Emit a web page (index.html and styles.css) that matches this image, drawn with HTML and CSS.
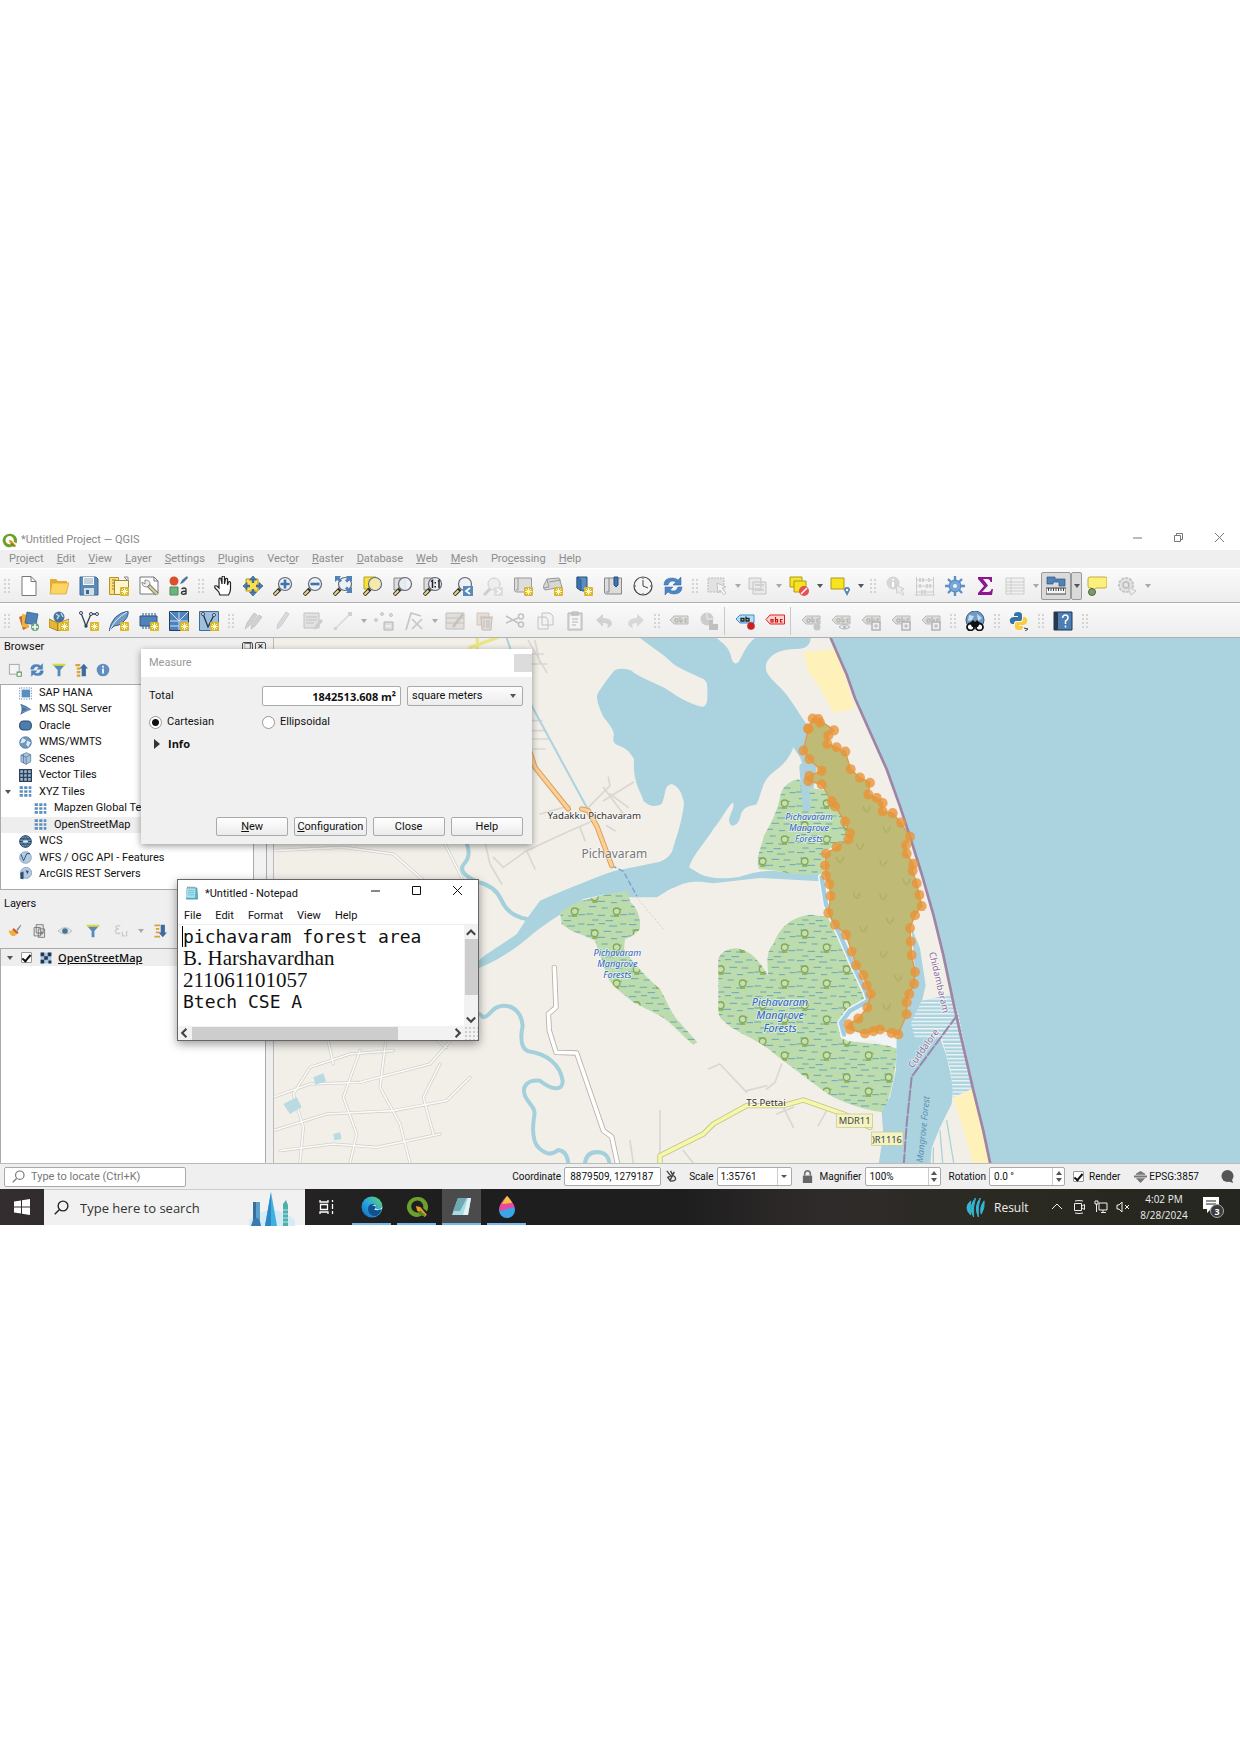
FILE: index.html
```html
<!DOCTYPE html>
<html lang="en">
<head>
<meta charset="utf-8">
<title>*Untitled Project — QGIS</title>
<link rel="stylesheet" href="styles.css">
</head>
<body>
<svg class="sprite" aria-hidden="true">
  <defs>
    <g id="star"><rect x="11" y="11" width="9" height="9" rx="1" fill="#d9b72e"/><path d="M15.500 12v7M12 15.500h7M13 13l5 5M18 13l-5 5" stroke="#fff9d0" stroke-width="1"/></g>
    <g id="lens"><path d="M1 19l6-6" stroke="#333" stroke-width="4"/><path d="M1.500 18.500l4-4" stroke="#f0d77a" stroke-width="2"/><circle cx="12" cy="8" r="6.500" fill="#e9f0f5" fill-opacity=".85" stroke="#667" stroke-width="1.200"/></g>
    <g id="tag" fill="#dcdcd8" stroke="#bbb"><path d="M1 9l4-4h14v8H5z"/><path d="M6 11V8h3v3zM11 6v5h2V8M18 8h-2v3h2" fill="none" stroke="#aaa"/></g>
    <g id="grid9" fill="#5f8fc0"><path d="M1 2h5v4H1zM8 2h5v4H8zM15 2h4v4h-4zM1 8h5v4H1zM8 8h5v4H8zM15 8h4v4h-4zM1 14h5v4H1zM8 14h5v4H8zM15 14h4v4h-4z"/></g>
  </defs>
  <symbol id="i-new" viewBox="0 0 20 20"><path d="M3 .5h9l5 5v14H3z" fill="#fff" stroke="#777"/><path d="M12 .5v5h5" fill="none" stroke="#777"/></symbol>
  <symbol id="i-open" viewBox="0 0 20 20"><path d="M1 3h6l2 2h9v12H1z" fill="#e8ac35"/><path d="M3 7h17l-3 11H1z" fill="#fbd663" stroke="#d9a032" stroke-width=".7"/></symbol>
  <symbol id="i-save" viewBox="0 0 20 20"><path d="M1 1h16l2 2v16H1z" fill="#5a8ab8" stroke="#3c6891"/><path d="M4 1h11v8H4z" fill="#f5f7f9"/><path d="M5 3h9M5 5h9M5 7h9" stroke="#9ab"/><path d="M5 12h10v7H5z" fill="#d5dde4"/><path d="M7 14h3v4H7z" fill="#3c6891"/></symbol>
  <symbol id="i-layout" viewBox="0 0 20 20"><path d="M.5 1.500h9v17h-9z" fill="#fbe17c" stroke="#b8922b"/><path d="M3 4h4M3 7h3M3 10h4M3 13h3" stroke="#9a7b1d"/><path d="M5.500 4.500h14v14h-14z" fill="#fdf5d0" stroke="#a9862a"/><path d="M15 1h4v4z" fill="#fff" stroke="#888"/><use href="#star"/></symbol>
  <symbol id="i-manager" viewBox="0 0 20 20"><path d="M1 1h14l4 4v13H1z" fill="#fff" stroke="#777"/><path d="M15 1v4h4" fill="none" stroke="#777"/><path d="M9 9l9 9" stroke="#777" stroke-width="4"/><path d="M10 10l8 8" stroke="#d5cf96" stroke-width="2.400"/><path d="M6 4v4l-3-2q0 5 5 5l3-3q0-4-5-4z" fill="#eee" stroke="#777" stroke-width=".8"/></symbol>
  <symbol id="i-style" viewBox="0 0 20 20"><circle cx="5" cy="5" r="4.500" fill="#d9502f"/><path d="M11 8l2-4 5-4 1 2-5 5z" fill="#53779e"/><path d="M1 11h8v8H1z" fill="#6cb37c" stroke="#4c8a5a"/><path d="M12.500 13q3-2 4.500 0v5.500M17 15q-5 0-4.500 2.500 2 2 4.500-.5" fill="none" stroke="#333" stroke-width="1.300"/></symbol>
  <symbol id="i-hand" viewBox="0 0 20 20"><path d="M7 19q-1-4-5-7-1-3 2-2l2 2V3q1-2 2 0l1 5V1q1.500-2 2.500 0v7l1-5q1.500-1.500 2 0v6l1-3q2-1 2 1v6q0 3-2 6z" fill="#fff" stroke="#222" stroke-width="1.200"/></symbol>
  <symbol id="i-pan" viewBox="0 0 20 20"><path d="M3 3h12v12H3z" fill="#fbe04b" stroke="#b79a1e"/><path d="M10 0l3.500 4h-7zM10 20l3.500-4h-7zM0 10l4-3.500v7zM20 10l-4-3.500v7z" fill="#4f82b8" stroke="#2d547e" stroke-width=".7"/><path d="M10 3v4M10 13v4M3 10h4M13 10h4" stroke="#3f6c9c" stroke-width="2.400"/></symbol>
  <symbol id="i-zin" viewBox="0 0 20 20"><use href="#lens"/><path d="M12 3.500v9M7.500 8h9" stroke="#3f73ad" stroke-width="2.600"/></symbol>
  <symbol id="i-zout" viewBox="0 0 20 20"><use href="#lens"/><path d="M7.500 8h9" stroke="#3f73ad" stroke-width="2.600"/></symbol>
  <symbol id="i-zfull" viewBox="0 0 20 20"><use href="#lens"/><path d="M2 0h6L6.500 2 9 4.500 7 6.500 4.500 4 2 6zM19 0h-6l1.500 2L12 4.500l2 2L17 4l2 2zM19 17h-6l1.500-2-2.500-2.500 2-2 2.500 2.500 2.500-2z" fill="#4f82b8"/></symbol>
  <symbol id="i-zsel" viewBox="0 0 20 20"><path d="M1 1h12v12H1z" fill="#f7e23c" stroke="#b7a51e"/><use href="#lens"/><circle cx="12" cy="8" r="5.500" fill="#f4e9a8"/></symbol>
  <symbol id="i-zlay" viewBox="0 0 20 20"><path d="M1 2h11v12H1z" fill="#ddd" stroke="#888"/><use href="#lens"/></symbol>
  <symbol id="i-znat" viewBox="0 0 20 20"><path d="M1 2h11v12H1z" fill="#ddd" stroke="#888"/><use href="#lens"/><path d="M8 5.500l1.500-1V12M15 5.500l1-1V12" fill="none" stroke="#222" stroke-width="1.500"/><path d="M11.500 6h1.500v1.500h-1.500zM11.500 10h1.500v1.500h-1.500z" fill="#222"/></symbol>
  <symbol id="i-zlast" viewBox="0 0 20 20"><use href="#lens"/><path d="M10 10h10v10H10z" fill="#5a8ab8"/><path d="M17 12l-4 3 4 3" fill="none" stroke="#fff" stroke-width="1.600"/></symbol>
  <symbol id="i-znext" viewBox="0 0 20 20"><path d="M1 19l6-6" stroke="#ccc" stroke-width="3"/><circle cx="11" cy="8" r="6" fill="#eee" stroke="#ccc"/><path d="M11 11h9v9h-9z" fill="#ddd"/><path d="M14 13l3 2.500-3 2.500" fill="none" stroke="#fff" stroke-width="1.500"/></symbol>
  <symbol id="i-mapview" viewBox="0 0 20 20"><path d="M1.500 2h17v14h-15q-2 0-2-2z" fill="#ddd" stroke="#999"/><path d="M5 2v12H3" fill="none" stroke="#999"/><use href="#star"/></symbol>
  <symbol id="i-3d" viewBox="0 0 20 20"><path d="M4 3l12-1 3 9-17 3-2-3z" fill="#d6d6d6" stroke="#999"/><path d="M4 3l2 8-6 1M6 6l12-2" fill="none" stroke="#999"/><use href="#star"/></symbol>
  <symbol id="i-bm" viewBox="0 0 20 20"><path d="M4 1h10v14h-4l-6-3z" fill="#5a8cc2" stroke="#274f7c"/><path d="M4 1l4 3v11l-4-3z" fill="#3e74ad" stroke="#274f7c" stroke-width=".7"/><use href="#star"/></symbol>
  <symbol id="i-bms" viewBox="0 0 20 20"><path d="M1.500 2h17v16h-15q-2 0-2-2zM6 2v14H3" fill="#dcdcdc" stroke="#888"/><path d="M11 1h4v8l-2 2-2-2z" fill="#3e74ad" stroke="#274f7c"/></symbol>
  <symbol id="i-clock" viewBox="0 0 20 20"><circle cx="10" cy="10" r="9" fill="#f5f5f5" stroke="#444" stroke-width="1.200"/><path d="M10 4v6l5 2M10 2v1M10 17v1M2 10h1M17 10h1" fill="none" stroke="#444"/></symbol>
  <symbol id="i-refresh" viewBox="0 0 20 20"><path d="M1 9q0-7 8-7 4 0 6 2l3-3v8h-8l3-3q-6-3-8 3zM19 11q0 7-8 7-4 0-6-2l-3 3v-8h8l-3 3q6 3 8-3z" fill="#4d86c4" stroke="#31659c" stroke-width=".5"/></symbol>
  <symbol id="i-select" viewBox="0 0 20 20"><path d="M1 2h16v14H1z" fill="#e2e2e2" stroke="#bbb" stroke-dasharray="2 1"/><path d="M10 7l9 4-4 1 4 5-2 2-4-5-2 3z" fill="#f5f5f5" stroke="#c5c5c5"/></symbol>
  <symbol id="i-form" viewBox="0 0 20 20"><path d="M1 2h12v11H1zM5 6h13v12H5z" fill="#e9e9e9" stroke="#c4c4c4"/><path d="M7 9h9M7 14h9" stroke="#d0d0d0" stroke-width="2"/></symbol>
  <symbol id="i-desel" viewBox="0 0 20 20"><path d="M1 1h12v10H1z" fill="#f7e41e" stroke="#a89b22"/><path d="M5 5h12v11H5z" fill="#f7e41e" stroke="#a89b22"/><circle cx="15" cy="15" r="5" fill="#e65252"/><path d="M12 18l6-6" stroke="#fff" stroke-width="1.500"/></symbol>
  <symbol id="i-selloc" viewBox="0 0 20 20"><path d="M1 2h13v11H1z" fill="#f7e41e" stroke="#a89b22"/><path d="M17 20l-3-6q0-3 3-3t3 3z" fill="#5a84ad"/><circle cx="17" cy="14" r="1.200" fill="#fff"/></symbol>
  <symbol id="i-ident" viewBox="0 0 20 20"><circle cx="8" cy="7" r="6.500" fill="#d6d6d6"/><path d="M8 6v5M8 3v1.500" stroke="#fff" stroke-width="2"/><path d="M11 9l8 4-3 1 3 4-1.500 1.500-3.500-4-2 2z" fill="#eee" stroke="#ccc"/></symbol>
  <symbol id="i-abacus" viewBox="0 0 20 20"><path d="M1.500 1v18M18.500 1v18M1 4h18M1 10h18M1 16h18M0 19h20" stroke="#ccc"/><path d="M5 2v4M8 2v4M14 2v4M5 8v4M12 8v4M15 8v4M7 14v4M10 14v4" stroke="#d2d2d2" stroke-width="2"/></symbol>
  <symbol id="i-gear" viewBox="0 0 20 20"><circle cx="10" cy="10" r="6" fill="#78a5d8" stroke="#4b7db5"/><path d="M10 0v5M10 15v5M0 10h5M15 10h5M3 3l3.500 3.500M13.500 13.500L17 17M17 3l-3.500 3.500M6.500 13.500L3 17" stroke="#5d8fc8" stroke-width="2.400"/><circle cx="10" cy="10" r="2" fill="#f1f1f1"/></symbol>
  <symbol id="i-sigma" viewBox="0 0 20 20"><path d="M3 1h14v5h-1.500Q15 3 12 3H8l5 6.500L7 16h6q3 0 3.500-3H18l-1 6H3v-2l6-7-6-7z" fill="#8e1690"/></symbol>
  <symbol id="i-table" viewBox="0 0 20 20"><path d="M1 2h18v16H1zM1 6h18M6 2v16M1 9h18M1 12h18M1 15h18" fill="#f1f1f1" stroke="#ccc"/></symbol>
  <symbol id="i-ruler" viewBox="0 0 20 20"><path d="M1 1h8v2h10v7h-6V6H7v2H1z" fill="#4f82b8" stroke="#2d547e" stroke-width=".7"/><path d="M0 12h20v6H0z" fill="#f5f5f5" stroke="#444"/><path d="M2.500 12v3M5 12v3M7.500 12v3M10 12v3M12.500 12v3M15 12v3M17.500 12v3" stroke="#444"/></symbol>
  <symbol id="i-tip" viewBox="0 0 20 20"><path d="M3 1h15q2 0 2 2v7q0 2-2 2H9l-4 4V12H3q-2 0-2-2V3q0-2 2-2z" fill="#fbf07d" stroke="#bfae38"/><circle cx="5" cy="16" r="3.500" fill="#7f9a67" stroke="#4e6640"/></symbol>
  <symbol id="i-action" viewBox="0 0 20 20"><circle cx="9" cy="9" r="7" fill="#e4e4e4" stroke="#c6c6c6" stroke-width="2" stroke-dasharray="3 1"/><circle cx="9" cy="9" r="3" fill="none" stroke="#bbb" stroke-width="1.500"/><path d="M11 11l8 4-5 4z" fill="#eee" stroke="#c4c4c4"/></symbol>
  <symbol id="i-dsm" viewBox="0 0 20 20"><path d="M0 6l5-2 5 12-6 3z" fill="#d0642f"/><path d="M3 3l7 1-1 13-6-1z" fill="#f0b23a"/><path d="M8 1l11 2-2 11-11-2z" fill="#4f82b8" stroke="#2d547e" stroke-width=".7"/><circle cx="16" cy="16" r="4" fill="#6ba578"/><path d="M16 13v6M13 16h6" stroke="#fff" stroke-width="1.500"/></symbol>
  <symbol id="i-gpkg" viewBox="0 0 20 20"><circle cx="10" cy="6" r="5.500" fill="#49739f"/><path d="M7 3l3 2-2 3M12 2l2 4" stroke="#bcd3ea" fill="none" stroke-width="1.500"/><path d="M0 8l9 4v8l-9-4z" fill="#e8b52f" stroke="#8a6a14" stroke-width=".7"/><path d="M9 12l11-4v8L9 20z" fill="#f8d95c" stroke="#8a6a14" stroke-width=".7"/><use href="#star"/></symbol>
  <symbol id="i-shp" viewBox="0 0 20 20"><path d="M2 2l5 13 5-12h6" fill="none" stroke="#345" stroke-width="1.300"/><circle cx="2" cy="2" r="1.500" fill="#fff" stroke="#345"/><circle cx="12" cy="3" r="1.500" fill="#fff" stroke="#345"/><circle cx="18" cy="3" r="1.500" fill="#fff" stroke="#345"/><circle cx="7" cy="15" r="1.700" fill="#345"/><use href="#star"/></symbol>
  <symbol id="i-feather" viewBox="0 0 20 20"><path d="M0 20Q3 3 19 0q1 6-5 11-4 4-9 4z" fill="#6f9cc8" stroke="#355f8c"/><path d="M1 19Q6 8 18 1" fill="none" stroke="#dce9f5"/><use href="#star"/></symbol>
  <symbol id="i-chip" viewBox="0 0 20 20"><path d="M1 5h17v10H1z" fill="#4f82b8" stroke="#2d547e"/><path d="M4 5V2M7 5V2M10 5V2M13 5V2M16 5V2M4 15v3M7 15v3M10 15v3" stroke="#2d547e"/><use href="#star"/></symbol>
  <symbol id="i-mesh" viewBox="0 0 20 20"><path d="M.5.500h19v19H.5z" fill="#4f82b8" stroke="#223f5e"/><path d="M1 10h18M10 1v18M1 1l9 9 9-9M1 15h9" stroke="#cfe2f4" fill="none"/><use href="#star"/></symbol>
  <symbol id="i-gpx" viewBox="0 0 20 20"><path d="M.5.500h19v19H.5z" fill="#9fbfdf" stroke="#456c94"/><path d="M4 3l5 13 6-12" fill="none" stroke="#234" stroke-width="1.300"/><circle cx="4" cy="3" r="1.500" fill="#fff" stroke="#345"/><circle cx="15" cy="4" r="1.500" fill="#fff" stroke="#345"/><use href="#star"/></symbol>
  <symbol id="i-pencils" viewBox="0 0 20 20"><path d="M2 18l2-6 7-10 3 2-7 10zM8 18l1-5 7-9 3 2-7 9z" fill="#d0d0d0" stroke="#c6c6c6"/></symbol>
  <symbol id="i-pencil" viewBox="0 0 20 20"><path d="M4 18l1-5 8-12 3 2-8 12z" fill="#dadada" stroke="#ccc"/></symbol>
  <symbol id="i-esave" viewBox="0 0 20 20"><path d="M1 2h15v15H1z" fill="#e2e2e2" stroke="#c2c2c2"/><path d="M3 6h11M3 9h11M3 12h8" stroke="#c2c2c2"/><path d="M11 19l1-4 6-7 2 2-6 7z" fill="#ccc"/></symbol>
  <symbol id="i-line" viewBox="0 0 20 20"><path d="M2 18L16 4" stroke="#d8d8d8" stroke-width="1.500"/><path d="M15 1h4v4h-4zM1 16h3v3H1z" fill="#d2d2d2"/></symbol>
  <symbol id="i-points" viewBox="0 0 20 20"><circle cx="2" cy="9" r="1.500" fill="#ddd" stroke="#c4c4c4"/><circle cx="8" cy="3" r="1.500" fill="#ddd" stroke="#c4c4c4"/><circle cx="17" cy="4" r="1.500" fill="#ddd" stroke="#c4c4c4"/><path d="M10 11h9v8h-9z" fill="#ddd" stroke="#b4b4b4"/><path d="M12 15h5" stroke="#fff"/></symbol>
  <symbol id="i-vertex" viewBox="0 0 20 20"><path d="M2 19L7 2l10 3M8 8l10 10M18 8L8 18" fill="none" stroke="#c6c6c6" stroke-width="1.700"/></symbol>
  <symbol id="i-attr" viewBox="0 0 20 20"><path d="M1 2h18v16H1zM1 7h18M1 12h18" fill="#e2dfda" stroke="#c2c0bc"/><path d="M8 16L18 3" stroke="#c2c0bc" stroke-width="2.500"/></symbol>
  <symbol id="i-trash" viewBox="0 0 20 20"><path d="M2 2h12v12H2z" fill="#e8ddd5" stroke="#d2c5bb"/><path d="M6 7h11l-1 12H7zM5 6h13" fill="#e0dcd9" stroke="#c4bab4"/><path d="M9 9v8M12 9v8M14 9v8" stroke="#c4bab4"/></symbol>
  <symbol id="i-cut" viewBox="0 0 20 20"><path d="M1 5l12 7M1 12l12-5" stroke="#c2c2c2" stroke-width="1.600"/><circle cx="16" cy="5.500" r="2.500" fill="none" stroke="#c2c2c2" stroke-width="1.500"/><circle cx="16" cy="13.500" r="2.500" fill="none" stroke="#c2c2c2" stroke-width="1.500"/></symbol>
  <symbol id="i-copy" viewBox="0 0 20 20"><path d="M7 2h8l3 3v9H7zM3 6h8l2 3v9H3z" fill="#f2f2f2" stroke="#c2c2c2"/></symbol>
  <symbol id="i-paste" viewBox="0 0 20 20"><path d="M3 2h14v17H3z" fill="#ddd" stroke="#b4b4b4"/><path d="M5 5h10v12H5z" fill="#f5f5f5"/><path d="M7 1h6v3H7zM7 8h6M7 11h6M7 14h4" stroke="#b4b4b4" fill="#ccc"/></symbol>
  <symbol id="i-undo" viewBox="0 0 20 20"><path d="M1 9l7-6v4q9 0 9 6-1 3-5 4 3-5-4-5v4z" fill="#d2d2d2"/></symbol>
  <symbol id="i-redo" viewBox="0 0 20 20"><path d="M19 9l-7-6v4q-9 0-9 6 1 3 5 4-3-5 4-5v4z" fill="#d8d8d8"/></symbol>
  <symbol id="i-tag" viewBox="0 0 20 20"><use href="#tag"/></symbol>
  <symbol id="i-dia" viewBox="0 0 20 20"><circle cx="8" cy="8" r="6.500" fill="#ccc"/><path d="M8 1v7h6" stroke="#eee" fill="none"/><path d="M10 9h4v4h5v6h-9z" fill="#c0c0c0"/></symbol>
  <symbol id="i-tagpin" viewBox="0 0 20 20"><path d="M1 8l4-4h14v8H5z" fill="#b5dcf5" stroke="#3d8fc9"/><path d="M6 10V7.500h3V10zM11 5.500V10h3V7.500h-3" fill="none" stroke="#222" stroke-width="1.300"/><circle cx="16" cy="15" r="3.800" fill="#cc2020"/></symbol>
  <symbol id="i-tagred" viewBox="0 0 20 20"><path d="M1 8.500l4-4.500h14.500v9H5z" fill="#fbd3d3" stroke="#e02020"/><path d="M6 11V8.500h2V11zM10.500 6v5h2V8.500h-2M17.500 8.500h-2V11h2" fill="none" stroke="#d01010" stroke-width="1.200"/></symbol>
  <symbol id="i-tagdot" viewBox="0 0 20 20"><use href="#tag"/><circle cx="16" cy="16" r="3.500" fill="#c6c6c6"/></symbol>
  <symbol id="i-tageye" viewBox="0 0 20 20"><use href="#tag"/><path d="M8 16q5-5 11 0-6 4-11 0z" fill="#eee" stroke="#b4b4b4"/><circle cx="13.500" cy="16" r="1.500" fill="#b4b4b4"/></symbol>
  <symbol id="i-tagbox" viewBox="0 0 20 20"><use href="#tag"/><path d="M11 11h8v8h-8z" fill="#eee" stroke="#b4b4b4" stroke-width="1.500"/><path d="M13 15h4M15 13v4" stroke="#b4b4b4"/></symbol>
  <symbol id="i-meta" viewBox="0 0 20 20"><circle cx="10" cy="9" r="9" fill="#6f9bc4" stroke="#345f8a"/><path d="M4 4l5 1-2 4-4 1zM12 3l5 4-4 3z" fill="#c7dcee"/><circle cx="5.500" cy="16" r="3.500" fill="#fff" stroke="#111" stroke-width="1.800"/><circle cx="14.500" cy="16" r="3.500" fill="#fff" stroke="#111" stroke-width="1.800"/><path d="M5 12l3-3 2 2 2-2 3 3-2 4H7z" fill="#111"/></symbol>
  <symbol id="i-python" viewBox="0 0 20 20"><path d="M5 4q0-3 4-3t4 3v4q0 2-2 2H7q-2 0-2 3H3q-3-1-2-5 1-2 4-2h4V5H5z" fill="#3672a5"/><path d="M14 6h2q3 1 2 5-1 3-4 3h-4v1h4v1q0 3-4 3t-4-3v-3q0-2 2-2h4q2 0 2-2z" fill="#f8cd3f"/><path d="M15 17l4 1-3 2" fill="none" stroke="#444"/></symbol>
  <symbol id="i-help" viewBox="0 0 20 20"><path d="M1 1h18v18H1z" fill="#4c7eb3" stroke="#1e354e"/><path d="M1 1h4v18H1z" fill="#26384c"/><path d="M9.500 7q.5-3 3-3t2.500 3q0 2-2.500 3v3M12.500 14.500v2" fill="none" stroke="#fff" stroke-width="1.500"/></symbol>
  <symbol id="i-add" viewBox="0 0 20 20"><path d="M2 2h14v14H2z" fill="#f4f4f4" stroke="#888"/><path d="M13 13h6v6h-6z" fill="#fff" stroke="#5b9b5f" stroke-width="1.500"/></symbol>
  <symbol id="i-filter" viewBox="0 0 20 20"><path d="M1 2h18l-7 8v9H8v-9z" fill="#5a8ab8"/><path d="M1 1h18v3H1z" fill="#d9dc3e"/></symbol>
  <symbol id="i-collapse" viewBox="0 0 20 20"><path d="M2 3h7M4 8h5M4 13h5M4 18h5" stroke="#d9a33a" stroke-width="3"/><path d="M14 1l6 7h-3v11h-6V8H8z" fill="#3f6c9c"/></symbol>
  <symbol id="i-expand" viewBox="0 0 20 20"><path d="M2 2h8M4 7h5M4 12h5M2 18h8" stroke="#d9a33a" stroke-width="2.500"/><path d="M14 19l6-7h-3V1h-6v11H8z" fill="#3f6c9c"/></symbol>
  <symbol id="i-info" viewBox="0 0 20 20"><circle cx="10" cy="10" r="9" fill="#5f8fc0"/><path d="M10 8v7M10 4v2.500" stroke="#fff" stroke-width="2.500"/></symbol>
  <symbol id="i-sap" viewBox="0 0 20 20"><path d="M4 4h13v12H4z" fill="#5a8dc0"/><path d="M1 1v18M19 1v18M3 1.500h15M3 18.500h15" stroke="#5a8dc0" stroke-width="1.500" stroke-dasharray="2 2"/></symbol>
  <symbol id="i-mssql" viewBox="0 0 20 20"><path d="M2 1q10 3 17 9-8 3-17 8 4-8 0-17z" fill="#47739f"/><path d="M4 5l12 5-11 4" fill="none" stroke="#8fb3d6"/></symbol>
  <symbol id="i-oracle" viewBox="0 0 20 20"><rect x="1" y="3" width="18" height="14" rx="6" fill="#4d7eae" stroke="#2b4a6b" stroke-width="1.600"/></symbol>
  <symbol id="i-globe" viewBox="0 0 20 20"><circle cx="10" cy="10" r="9" fill="#6e97be" stroke="#44698f"/><path d="M5 3l6 3-3 4-6 1zM13 7l5 3-4 7-3-4z" fill="#dfeaf4"/></symbol>
  <symbol id="i-cube" viewBox="0 0 20 20"><path d="M3 5l8-4 7 3v11l-7 4-8-4z" fill="#a9c3dc" stroke="#44698f"/><path d="M3 5l8 3 7-4M11 8v11M7 3v14" fill="none" stroke="#44698f"/></symbol>
  <symbol id="i-vtile" viewBox="0 0 20 20"><path d="M1 1h18v18H1z" fill="#9ab6d2"/><path d="M1 1h18v18H1zM7 1v18M13 1v18M1 7h18M1 13h18" fill="none" stroke="#2d4258" stroke-width="2"/></symbol>
  <symbol id="i-grid" viewBox="0 0 20 20"><use href="#grid9"/></symbol>
  <symbol id="i-wcs" viewBox="0 0 20 20"><circle cx="10" cy="10" r="9" fill="#6d96be" stroke="#26425f" stroke-width="1.500"/><path d="M2 6h16M1 10h18M2 14h16" stroke="#26425f" stroke-width="1.500"/><path d="M10 1q-8 9 0 18M10 1q8 9 0 18" fill="none" stroke="#26425f"/><path d="M6 8.500h8v3H6z" fill="#dfeaf4"/></symbol>
  <symbol id="i-wfs" viewBox="0 0 20 20"><circle cx="10" cy="10" r="9" fill="#b4cadf" stroke="#6d8cab"/><path d="M3 5l4 10 5-11h5" fill="none" stroke="#2d547e" stroke-width="1.500"/></symbol>
  <symbol id="i-arc" viewBox="0 0 20 20"><circle cx="11" cy="9" r="8.500" fill="#b4cadf" stroke="#6d8cab"/><path d="M2 18V9l5-2v12zM10 5l5 1-2 5z" fill="#2f4f70"/></symbol>
  <symbol id="i-brush" viewBox="0 0 20 20"><path d="M12 8l6-7 1 1-5 8z" fill="#7f95a8"/><path d="M1 9q4 2 8-2l6 5q-5 6-9 5-5-3-5-8z" fill="#eeb23c"/><path d="M7 7l7 6" stroke="#d25a33" stroke-width="3"/></symbol>
  <symbol id="i-group" viewBox="0 0 20 20"><path d="M6 1h10v12H6zM3 5h9v12H3zM9 7h9v12H9z" fill="#e9e9e9" stroke="#777" stroke-width="1.300"/><path d="M14 10v6M11 13h5" stroke="#777" stroke-width="1.300"/></symbol>
  <symbol id="i-eye" viewBox="0 0 20 20"><path d="M0 10q10-10 20 0-10 9-20 0z" fill="#dce5ed" stroke="#9bb"/><circle cx="10" cy="10" r="4" fill="#4e7294"/></symbol>
  <symbol id="i-eps" viewBox="0 0 20 20"><path d="M9 3q-6-2-6 2 0 2 4 2-5 0-5 4 1 4 7 2M12 11v6h4M18 10v8" fill="none" stroke="#c9c9c9" stroke-width="1.800"/></symbol>
  <symbol id="i-raster" viewBox="0 0 20 20"><path d="M1 1h18v18H1z" fill="#a9c6e2"/><path d="M1 1h6v6H1zM13 1h6v6h-6zM7 7h6v6H7zM1 13h6v6H1zM14 14h5v5h-5z" fill="#203850"/></symbol>
  <symbol id="i-search" viewBox="0 0 20 20"><circle cx="12" cy="8" r="6.500" fill="none" stroke="currentColor" stroke-width="1.800"/><path d="M7 13l-6 6" stroke="currentColor" stroke-width="2"/></symbol>
  <symbol id="i-q" viewBox="0 0 20 20"><path d="M10 1a9 9 0 1 0 4 17l-3-3a5.500 5.500 0 1 1 4.500-4l3.500 3A9 9 0 0 0 10 1z" fill="#6ba02c"/><path d="M9 9l4 1 6 7-2 2-7-6z" fill="#e99b2b"/><path d="M13 13l5 5h-4l-3-3z" fill="#538c26"/></symbol>
  <symbol id="i-pad" viewBox="0 0 20 20"><path d="M3 2h14l1 16H2z" fill="#59b7cf" stroke="#3a8ea5"/><path d="M3 2h12l-1 14H1z" fill="#a8e2ee"/><path d="M4 6h9M4 9h9M4 12h9" stroke="#66b8cc"/><path d="M4 0v3M7 0v3M10 0v3M13 0v3" stroke="#666"/></symbol>
</svg>

<main class="desktop">
  <section class="qgis">
    <header class="titlebar">
      <svg class="logo"><use href="#i-q"/></svg>
      <h1>*Untitled Project — QGIS</h1>
      <div class="winbtns">
        <button aria-label="Minimize"><svg viewBox="0 0 12 12"><path d="M1 6h9"/></svg></button>
        <button aria-label="Restore"><svg viewBox="0 0 12 12"><path d="M1.500 3.500h6v6h-6zM3.500 3V1.500h6v6H8"/></svg></button>
        <button aria-label="Close"><svg viewBox="0 0 12 12"><path d="M1 1l9 9M10 1l-9 9"/></svg></button>
      </div>
    </header>
    <nav class="menubar">
      <button>P<u>r</u>oject</button><button><u>E</u>dit</button><button><u>V</u>iew</button><button><u>L</u>ayer</button><button><u>S</u>ettings</button><button><u>P</u>lugins</button><button>Vect<u>o</u>r</button><button><u>R</u>aster</button><button><u>D</u>atabase</button><button><u>W</u>eb</button><button><u>M</u>esh</button><button>Pro<u>c</u>essing</button><button><u>H</u>elp</button>
    </nav>
    <div class="toolbar">
      <i class="grip"></i>
      <button aria-label="New"><svg><use href="#i-new"/></svg></button>
      <button aria-label="Open"><svg><use href="#i-open"/></svg></button>
      <button aria-label="Save"><svg><use href="#i-save"/></svg></button>
      <button aria-label="New layout"><svg><use href="#i-layout"/></svg></button>
      <button aria-label="Layout manager"><svg><use href="#i-manager"/></svg></button>
      <button aria-label="Style manager"><svg><use href="#i-style"/></svg></button>
      <i class="grip"></i>
      <button aria-label="Pan"><svg><use href="#i-hand"/></svg></button>
      <button aria-label="Pan to selection"><svg><use href="#i-pan"/></svg></button>
      <button aria-label="Zoom in"><svg><use href="#i-zin"/></svg></button>
      <button aria-label="Zoom out"><svg><use href="#i-zout"/></svg></button>
      <button aria-label="Zoom full"><svg><use href="#i-zfull"/></svg></button>
      <button aria-label="Zoom to selection"><svg><use href="#i-zsel"/></svg></button>
      <button aria-label="Zoom to layer"><svg><use href="#i-zlay"/></svg></button>
      <button aria-label="Native resolution"><svg><use href="#i-znat"/></svg></button>
      <button aria-label="Zoom last"><svg><use href="#i-zlast"/></svg></button>
      <button aria-label="Zoom next"><svg><use href="#i-znext"/></svg></button>
      <button aria-label="New map view"><svg><use href="#i-mapview"/></svg></button>
      <button aria-label="New 3D view"><svg><use href="#i-3d"/></svg></button>
      <button aria-label="New bookmark"><svg><use href="#i-bm"/></svg></button>
      <button aria-label="Bookmarks"><svg><use href="#i-bms"/></svg></button>
      <button aria-label="Temporal controller"><svg><use href="#i-clock"/></svg></button>
      <button aria-label="Refresh"><svg><use href="#i-refresh"/></svg></button>
      <i class="grip"></i>
      <button aria-label="Select"><svg><use href="#i-select"/></svg></button><button class="drop dim" aria-label="More"></button>
      <button aria-label="Select by value"><svg><use href="#i-form"/></svg></button><button class="drop dim" aria-label="More"></button>
      <button aria-label="Deselect"><svg><use href="#i-desel"/></svg></button><button class="drop" aria-label="More"></button>
      <button aria-label="Select by location"><svg><use href="#i-selloc"/></svg></button><button class="drop" aria-label="More"></button>
      <i class="grip"></i>
      <button aria-label="Identify"><svg><use href="#i-ident"/></svg></button>
      <button aria-label="Field calculator"><svg><use href="#i-abacus"/></svg></button>
      <button aria-label="Toolbox"><svg><use href="#i-gear"/></svg></button>
      <button aria-label="Statistics"><svg><use href="#i-sigma"/></svg></button>
      <button aria-label="Attribute table"><svg><use href="#i-table"/></svg></button><button class="drop dim" aria-label="More"></button>
      <button class="on" aria-label="Measure"><svg><use href="#i-ruler"/></svg></button><button class="drop on" aria-label="More"></button>
      <button aria-label="Map tips"><svg><use href="#i-tip"/></svg></button>
      <button aria-label="Actions"><svg><use href="#i-action"/></svg></button><button class="drop dim" aria-label="More"></button>
    </div>
    <div class="toolbar">
      <i class="grip"></i>
      <button aria-label="Data sources"><svg><use href="#i-dsm"/></svg></button>
      <button aria-label="New GeoPackage"><svg><use href="#i-gpkg"/></svg></button>
      <button aria-label="New shapefile"><svg><use href="#i-shp"/></svg></button>
      <button aria-label="New SpatiaLite"><svg><use href="#i-feather"/></svg></button>
      <button aria-label="New scratch layer"><svg><use href="#i-chip"/></svg></button>
      <button aria-label="New mesh"><svg><use href="#i-mesh"/></svg></button>
      <button aria-label="New GPX"><svg><use href="#i-gpx"/></svg></button>
      <i class="grip"></i>
      <button aria-label="Current edits"><svg><use href="#i-pencils"/></svg></button>
      <button aria-label="Toggle editing"><svg><use href="#i-pencil"/></svg></button>
      <button aria-label="Save edits"><svg><use href="#i-esave"/></svg></button>
      <button aria-label="Add line"><svg><use href="#i-line"/></svg></button><button class="drop dim" aria-label="More"></button>
      <button aria-label="Add points"><svg><use href="#i-points"/></svg></button>
      <button aria-label="Vertex tool"><svg><use href="#i-vertex"/></svg></button><button class="drop dim" aria-label="More"></button>
      <button aria-label="Modify attributes"><svg><use href="#i-attr"/></svg></button>
      <button aria-label="Delete"><svg><use href="#i-trash"/></svg></button>
      <button aria-label="Cut"><svg><use href="#i-cut"/></svg></button>
      <button aria-label="Copy"><svg><use href="#i-copy"/></svg></button>
      <button aria-label="Paste"><svg><use href="#i-paste"/></svg></button>
      <button aria-label="Undo"><svg><use href="#i-undo"/></svg></button>
      <button aria-label="Redo"><svg><use href="#i-redo"/></svg></button>
      <i class="grip"></i>
      <button aria-label="Labels"><svg><use href="#i-tag"/></svg></button>
      <button aria-label="Diagrams"><svg><use href="#i-dia"/></svg></button>
      <i class="sep"></i>
      <button aria-label="Pinned labels"><svg><use href="#i-tagpin"/></svg></button>
      <button aria-label="Unplaced labels"><svg><use href="#i-tagred"/></svg></button>
      <i class="sep"></i>
      <button aria-label="Pin label"><svg><use href="#i-tagdot"/></svg></button>
      <button aria-label="Show label"><svg><use href="#i-tageye"/></svg></button>
      <button aria-label="Move label"><svg><use href="#i-tagbox"/></svg></button>
      <button aria-label="Rotate label"><svg><use href="#i-tagbox"/></svg></button>
      <button aria-label="Change label"><svg><use href="#i-tagbox"/></svg></button>
      <i class="grip"></i>
      <button aria-label="MetaSearch"><svg><use href="#i-meta"/></svg></button>
      <i class="grip"></i>
      <button aria-label="Python console"><svg><use href="#i-python"/></svg></button>
      <i class="grip"></i>
      <button aria-label="Help contents"><svg><use href="#i-help"/></svg></button>
      <i class="grip"></i>
    </div>

    <div class="work">
      <aside class="side">
        <div class="dock browser">
          <header><h2>Browser</h2><span class="dockbtns"><button aria-label="Float">❐</button><button aria-label="Close panel">✕</button></span></header>
          <div class="docktools">
            <button aria-label="Add"><svg><use href="#i-add"/></svg></button><button aria-label="Reload"><svg><use href="#i-refresh"/></svg></button><button aria-label="Filter"><svg><use href="#i-filter"/></svg></button><button aria-label="Collapse"><svg><use href="#i-collapse"/></svg></button><button aria-label="Properties"><svg><use href="#i-info"/></svg></button>
          </div>
          <div class="treebox">
            <ul class="tree">
              <li><svg><use href="#i-sap"/></svg>SAP HANA</li>
              <li><svg><use href="#i-mssql"/></svg>MS SQL Server</li>
              <li><svg><use href="#i-oracle"/></svg>Oracle</li>
              <li><svg><use href="#i-globe"/></svg>WMS/WMTS</li>
              <li><svg><use href="#i-cube"/></svg>Scenes</li>
              <li><svg><use href="#i-vtile"/></svg>Vector Tiles</li>
              <li class="open"><svg><use href="#i-grid"/></svg>XYZ Tiles</li>
              <li class="child"><svg><use href="#i-grid"/></svg>Mapzen Global Terrain</li>
              <li class="child hot"><svg><use href="#i-grid"/></svg>OpenStreetMap</li>
              <li><svg><use href="#i-wcs"/></svg>WCS</li>
              <li><svg><use href="#i-wfs"/></svg>WFS / OGC API - Features</li>
              <li><svg><use href="#i-arc"/></svg>ArcGIS REST Servers</li>
            </ul>
            <div class="track"></div>
          </div>
        </div>
        <div class="dock layers">
          <header><h2>Layers</h2></header>
          <div class="docktools roomy">
            <button class="near" aria-label="Styling"><svg><use href="#i-brush"/></svg></button><button class="near" aria-label="Add group"><svg><use href="#i-group"/></svg></button><button aria-label="Themes"><svg><use href="#i-eye"/></svg></button><button aria-label="Filter legend"><svg><use href="#i-filter"/></svg></button><button aria-label="Expression filter"><svg><use href="#i-eps"/></svg></button><button class="drop dim" aria-label="More"></button><button aria-label="Expand all"><svg><use href="#i-expand"/></svg></button>
          </div>
          <div class="layerbox">
            <label class="layer"><span class="arrow"></span><input type="checkbox" class="check" checked><svg><use href="#i-raster"/></svg><b>OpenStreetMap</b></label>
          </div>
        </div>
      </aside>

      <!-- Map canvas: three drawing units per screen pixel -->
      <svg class="map" viewBox="-558 12 2898 1575" preserveAspectRatio="xMinYMin slice" role="img" aria-label="Map canvas">
        <defs>
          <pattern id="mangrove" width="126" height="108" patternUnits="userSpaceOnUse">
            <rect width="126" height="108" fill="#bcdcae"/>
            <path d="M4 8h20M40 5h16M70 12h22M104 6h16M14 24h18M54 28h20M90 30h18M2 42h14M34 46h22M76 50h16M108 44h16M10 62h20M48 66h16M84 70h22M2 84h18M36 88h20M74 90h14M104 86h18M20 102h16M60 104h20" stroke="#6aa5ba" stroke-width="3"/>
            <g fill="#c5e0ae" stroke="#84a855" stroke-width="4"><circle cx="26" cy="34" r="10"/><circle cx="92" cy="76" r="10"/></g>
            <path d="M20 48h12M86 90h12" stroke="#84a855" stroke-width="4"/>
          </pattern>
          <pattern id="tidal" width="20" height="11" patternUnits="userSpaceOnUse"><rect width="20" height="11" fill="#aad3df"/><rect width="20" height="4" fill="#f4f6f5"/></pattern>
          <marker id="node" markerWidth="32" markerHeight="32" refX="16" refY="16" markerUnits="userSpaceOnUse"><circle cx="16" cy="16" r="15" fill="#e8953a" fill-opacity=".8"/></marker>
          <path id="lanes" d="M-561 1390L-450 1350-300 1345-90 1290-20 1210M-561 1490L-400 1440-200 1430-40 1400 30 1330M-480 1587L-470 1480-500 1380-450 1300-330 1260-200 1250M-330 1587L-310 1500-350 1390-300 1250M-150 1587L-180 1470-240 1360-220 1200M-540 1550L-380 1530-250 1540-60 1500M-60 1290L-110 1390-80 1500M-400 1200L-380 1290M-120 1180L-40 1240M-561 650L-350 640-200 660-40 800M-60 600L20 760"/>
        </defs>
        <rect x="-561" y="12" width="2901" height="1587" fill="#f2efe9"/>

        <use href="#lanes" class="lanecase"/>
        <use href="#lanes" class="laneface"/>
        <path d="M-530 1410l40-20 15 30-35 20zM-440 1330l30-12 8 24-32 10zM-380 1500l20-5 5 20-22 4z" fill="#b9d9e3"/>
        <g class="lane">
          <path d="M75 625L90 690 125 750M100 670L130 700 200 650 330 590 400 560M200 650L225 705M240 540L330 515M385 520L450 455 445 430M430 500L520 445M430 460L490 540M450 480L505 520M360 580L375 620M440 575L465 590M215 260h30M215 290h40M215 315h50M215 345h40M205 20L260 115M225 20L240 90M215 60h35M215 90h45"/>
          <path d="M745 1305L780 1290 860 1375M860 1370L920 1355M965 1290L945 1345 920 1365M910 1400L960 1400 1000 1480M950 1440L1000 1420M1075 1475L1100 1430M600 1430V1560M670 1550L700 1587M510 1520L520 1587"/>
        </g>
        <path class="roadcase" d="M283 1000L288 1120 265 1140 268 1190 288 1255 350 1257 430 1490 455 1508 472 1587"/>
        <path class="road" d="M283 1000L288 1120 265 1140 268 1190 288 1255 350 1257 430 1490 455 1508 472 1587"/>

        <path class="creek" d="M20 628Q35 665 12 690T55 745Q105 755 125 800T200 855"/>
        <path class="creek" d="M-30 1145Q30 1110 70 1150C90 1150 95 1115 130 1115S185 1140 188 1175Q175 1240 205 1252C260 1260 300 1290 308 1340C310 1375 270 1365 240 1340C200 1335 185 1360 195 1385S230 1420 222 1450C215 1500 220 1530 240 1545S270 1565 295 1548Q320 1550 325 1587M375 1587Q380 1550 420 1555 445 1560 448 1587"/>
        <path d="M140 12L160 70 215 215 380 520" fill="none" stroke="#aad3df" stroke-width="6"/>

        <path class="water" d="M540 12C590 50 610 60 640 90 670 110 710 125 730 135 745 145 742 160 742 190Q742 220 725 218C680 208 650 185 610 160 570 140 530 125 515 110Q490 100 465 108C445 130 425 160 412 180Q408 200 420 225C430 260 455 270 462 300Q455 325 470 332C490 340 505 345 522 375Q520 410 525 430C530 460 545 480 550 500Q575 525 605 510C620 480 610 455 635 450Q665 460 672 510C665 570 645 620 640 640Q635 670 600 683L460 712C380 740 300 775 240 800L200 855 170 900C130 930 90 950 55 980V1003C100 985 160 950 200 915 250 870 300 845 370 795L440 780 510 790 590 790C610 780 625 765 640 762 680 740 715 740 760 748L900 732 1080 742 1200 760 1100 710 1020 720 940 710C890 712 870 720 840 728Q760 740 720 720L687 700C700 660 740 620 760 585 790 550 800 520 820 505L820 520C810 550 800 560 815 575 840 575 840 545 845 535 860 510 890 515 890 510 905 480 905 440 940 415 970 390 985 380 1000 340L1020 370C1040 420 1030 480 1050 530L1070 400 1040 270C1010 230 990 190 960 160 930 130 910 115 920 85 940 50 980 45 1010 45Q1050 45 1052 12H885C860 30 850 60 835 85Q822 95 815 75C810 40 785 25 770 12z"/>
        <path d="M455 695L490 712 530 785" fill="none" stroke="#7c9fd0" stroke-width="4" stroke-dasharray="14 10"/>
        <path d="M530 790L610 885" fill="none" stroke="#e3c9c1" stroke-width="3" stroke-dasharray="4 8"/>

        <path class="trunkcase" d="M205 340L225 400 325 525M365 525L385 530 412 580 455 695"/>
        <path class="trunk" d="M205 340L225 400 325 525M365 525L385 530 412 580 455 695"/>
        <path d="M52 12V50M30 40L110 12" fill="none" stroke="#e9e68a" stroke-width="10"/>
        <path class="mdrcase" d="M600 1587V1565L730 1500 760 1470 860 1415 970 1415 1030 1398 1150 1440 1230 1480"/>
        <path class="mdr" d="M600 1587V1565L730 1500 760 1470 860 1415 970 1415 1030 1398 1150 1440 1230 1480"/>

        <g fill="url(#mangrove)">
          <path d="M960 490C965 460 980 445 1015 435L1040 460 1100 470 1190 560 1160 620 1095 650 1090 722 1000 720 950 710 897 705C885 670 905 640 910 610 930 570 950 540 960 490z"/>
          <path d="M300 835L350 805 440 780 500 772 512 805C530 820 543 850 540 885Q525 905 495 915L492 945C520 990 570 1040 600 1065 620 1100 630 1130 650 1155L712 1225 700 1232C660 1200 640 1170 600 1145L520 1105C490 1080 460 1060 445 1035L405 920C370 900 340 900 305 870z"/>
          <path d="M775 975Q785 945 830 943C870 950 890 970 925 1025 920 980 920 950 940 930 960 880 990 850 1050 842L1110 850 1220 1080 1210 1110 1140 1160 1160 1220 1310 1238C1310 1310 1290 1400 1268 1435 1200 1425 1130 1400 1090 1370L950 1265C890 1210 830 1200 790 1160Q775 1150 775 1130z"/>
        </g>
        <path d="M1030 400L1040 520" stroke="#aad3df" stroke-width="24"/>

        <g transform="translate(840 0) scale(1 1.014)">
          <path d="M190 55L290 45 345 220 280 232 240 160 205 110z" fill="#fff1ba"/>
          <path class="water" d="M272 12L320 120 345 190 390 290 440 400 480 510 510 600 545 710 580 830 610 950 640 1090 665 1200 700 1350 730 1470 755 1587H1500V12z"/>
          <path class="bank" d="M245 720L258 800 300 890 340 980 378 1060 385 1085 330 1115 303 1150 312 1188 345 1195 400 1190 470 1215"/>
          <path class="stream" d="M245 720L258 800 300 890 340 980 378 1060 385 1085 330 1115 303 1150 312 1185"/>
          <path class="water" d="M470 1200L485 1165 510 1080 525 1000 515 870 540 930 557 1040 545 1090 515 1150 525 1190 600 1195 620 1250 640 1340 635 1390 600 1460 575 1520 570 1587H413L430 1480 425 1415 450 1370 468 1290z"/>
          <path d="M545 1085L635 1065 655 1120 700 1345 640 1370 632 1290 605 1195H525L513 1150z" fill="url(#tidal)"/>
          <path d="M640 1375L700 1345 755 1587H705L665 1450z" fill="#fff1ba"/>
          <path d="M600 1470L610 1587M620 1440L645 1587M580 1520V1587" stroke="#aad3df" stroke-width="4"/>
          <path class="coast" d="M272 12L320 120 345 190 390 290 440 400 480 510 510 600 545 710 580 830 610 950 640 1090 665 1200 700 1350 730 1470 755 1587"/>
          <path d="M650 1130L515 1310 500 1450 490 1587" fill="none" stroke="#9b86ab" stroke-width="6" stroke-dasharray="30 8"/>
          <path class="area" d="M205 280L218 250 240 262 235 252 282 285 265 300 262 325 290 335 316 348 332 400 360 425 390 440 385 475 410 485 428 500 428 525 458 530 483 558 510 600 498 625 500 650 520 680 518 700 530 738 538 772 545 805 525 832 510 870 512 910 515 950 525 1000 522 1035 508 1065 500 1090 500 1125 475 1185 455 1180 420 1170 400 1175 375 1182 330 1170 325 1155 355 1138 382 1105 392 1065 380 1040 370 1010 348 980 335 940 318 890 285 860 265 825 272 775 268 740 258 715 255 685 258 650 290 630 325 608 330 590 315 555 285 510 275 495 245 445 205 435 208 420 245 405 208 370 190 345z"/>
          <g fill="none" stroke="#aeb062" stroke-width="4"><path id="tuft" d="M370 510q2 16 14 16M390 510q-2 16-6 8"/><use href="#tuft" x="60" y="60"/><use href="#tuft" x="-20" y="110"/><use href="#tuft" x="-80" y="150"/><use href="#tuft" x="50" y="160"/><use href="#tuft" x="120" y="215"/><use href="#tuft" x="-30" y="255"/><use href="#tuft" x="50" y="260"/><use href="#tuft" x="-10" y="355"/><use href="#tuft" x="70" y="330"/><use href="#tuft" x="50" y="430"/><use href="#tuft" x="95" y="500"/><use href="#tuft" x="60" y="585"/></g>
        </g>
        <g transform="translate(840 0)">
          <g class="shield"><rect x="290" y="1440" width="108" height="40"/><rect x="395" y="1494" width="94" height="40"/></g>
          <text class="ref" x="344" y="1471">MDR11</text>
          <text class="ref" x="441" y="1526">)R1116</text>
          <text class="bound" transform="translate(567 956) rotate(77)">Chidambaram</text>
          <text class="bound" transform="translate(518 1304) rotate(-54)">Cuddalore</text>
          <text class="res" transform="translate(548 1586) rotate(-84)">Mangrove Forest</text>
        </g>

        <text class="village" x="403" y="555">Yadakku Pichavaram</text>
        <text class="town" x="463" y="672">Pichavaram</text>
        <text class="village" x="918" y="1417">TS Pettai</text>
        <g class="wood">
          <text x="1047" y="559">Pichavaram</text><text x="1047" y="592">Mangrove</text><text x="1047" y="625">Forests</text>
          <text x="472" y="967">Pichavaram</text><text x="472" y="1000">Mangrove</text><text x="472" y="1033">Forests</text>
        </g>
        <g class="wood big">
          <text x="960" y="1116">Pichavaram</text><text x="960" y="1155">Mangrove</text><text x="960" y="1194">Forests</text>
        </g>
      </svg>
    </div>

    <footer class="status">
      <label class="locate"><svg><use href="#i-search"/></svg><input type="text" placeholder="Type to locate (Ctrl+K)" aria-label="Locate"></label>
      <label for="coord">Coordinate</label><input id="coord" class="field coord" type="text" value="8879509, 1279187">
      <button aria-label="Toggle extents"><svg viewBox="0 0 14 14"><path d="M2 1l4 5M6 1l3 6M10 2L5 12M3 8q6-4 8 0t-5 4z" fill="none" stroke="#444" stroke-width="1.500"/></svg></button>
      <label for="scale">Scale</label><span class="combo"><input id="scale" type="text" value="1:35761"><i></i></span>
      <button aria-label="Lock scale"><svg viewBox="0 0 14 14"><path d="M4 6V4q0-3 3-3t3 3v2" fill="none" stroke="#777" stroke-width="1.800"/><path d="M2 6h10v8H2z" fill="#666"/></svg></button>
      <label for="mag">Magnifier</label><span class="spin"><input id="mag" type="text" value="100%"><i></i></span>
      <label for="rot">Rotation</label><span class="spin"><input id="rot" type="text" value="0.0 °"><i></i></span>
      <label class="render"><input type="checkbox" class="check" checked>Render</label>
      <button class="epsg"><svg viewBox="0 0 14 14"><path d="M7 1l5 3v1H2V4zM0 6h14v2H0zM2 9h10l-5 5z" fill="#777"/></svg>EPSG:3857</button>
      <button class="msg" aria-label="Messages"><svg viewBox="0 0 14 14"><circle cx="7" cy="6.500" r="6.500" fill="#555"/><path d="M8 12l5 2-2-6z" fill="#555"/></svg></button>
    </footer>
  </section>

  <section class="measure" role="dialog" aria-label="Measure">
    <header><h2>Measure</h2><button aria-label="Close"></button></header>
    <form>
      <div class="row"><label for="total">Total</label><input id="total" type="text" value="1842513.608 m²" readonly><select aria-label="Units"><option>square meters</option></select></div>
      <div class="row radios"><label><input type="radio" name="mode" checked>Cartesian</label><label><input type="radio" name="mode">Ellipsoidal</label></div>
      <details><summary>Info</summary></details>
      <div class="actions"><button type="button"><u>N</u>ew</button><button type="button"><u>C</u>onfiguration</button><button type="button">Close</button><button type="button">Help</button></div>
    </form>
  </section>

  <section class="notepad" role="dialog" aria-label="Notepad">
    <header>
      <svg class="logo"><use href="#i-pad"/></svg><h2>*Untitled - Notepad</h2>
      <button aria-label="Minimize"><svg viewBox="0 0 12 12"><path d="M1 6h9"/></svg></button>
      <button aria-label="Maximize"><svg viewBox="0 0 12 12"><path d="M1.500 1.500h8v8h-8z"/></svg></button>
      <button aria-label="Close"><svg viewBox="0 0 12 12"><path d="M1 1l9 9M10 1l-9 9"/></svg></button>
    </header>
    <nav><button>File</button><button>Edit</button><button>Format</button><button>View</button><button>Help</button></nav>
    <div class="pane">
      <div class="editor" role="textbox" aria-multiline="true" aria-label="Text" contenteditable="true" spellcheck="false"><p class="mono caret">pichavaram forest area</p><p>B. Harshavardhan</p><p>211061101057</p><p class="mono">Btech CSE A</p></div>
      <div class="vbar"><svg viewBox="0 0 10 10"><path d="M2 7l3-3 3 3"/></svg><span></span><svg viewBox="0 0 10 10"><path d="M2 4l3 3 3-3"/></svg></div>
      <div class="hbar"><svg viewBox="0 0 10 10"><path d="M6 2L3 5l3 3"/></svg><span></span><svg viewBox="0 0 10 10"><path d="M4 2l3 3-3 3"/></svg></div>
      <div class="corner"></div>
    </div>
  </section>

  <footer class="taskbar">
    <button class="start" aria-label="Start"><svg viewBox="0 0 16 16"><path d="M0 2.500l7-1v6H0zM8 1.300L16 0v7.500H8zM0 8.500h7v6l-7-1zM8 8.500h8V16l-8-1.300z" fill="#fff"/></svg></button>
    <label class="search"><svg><use href="#i-search"/></svg><input type="text" placeholder="Type here to search" aria-label="Search">
      <svg class="city" viewBox="0 0 46 36"><path d="M0 36V30q23-20 46 0v6z" fill="#d5ecf7"/><path d="M4 12h7v24H4z" fill="#5ba0c8"/><path d="M4 12h3v24H4z" fill="#376f9a"/><path d="M4 30q6-6 8 6H2z" fill="#3b7ab0"/><path d="M22 2l6 34H16z" fill="#3fb0e2"/><path d="M22 2v34h-6z" fill="#2f86c6"/><path d="M34 14l3-4 2 5v21h-5z" fill="#50b0a8"/><path d="M34 20h5M34 24h5M34 28h5M34 32h5" stroke="#bfe3f3"/></svg>
    </label>
    <button aria-label="Task view"><svg viewBox="0 0 16 16"><path d="M1 1v2h8V1M1 15v-2h8v2M1.500 5.500h7v5h-7zM13.500 1v2M13.500 5v5M13.500 12v3" fill="none" stroke="#fff" stroke-width="1.300"/></svg></button>
    <button class="app" aria-label="Edge"><svg viewBox="0 0 22 22"><defs><linearGradient id="edge" x1="0" y1="1" x2="1" y2="0"><stop offset="0" stop-color="#1465b8"/><stop offset=".5" stop-color="#2aa7e0"/><stop offset="1" stop-color="#5edc5a"/></linearGradient></defs><circle cx="11" cy="11" r="10.500" fill="url(#edge)"/><path d="M7 13q0-5 5-5 4 0 3.500 3-.5 1-1.500 2 3 2 7 0-3 8-9 7-5-2-5-7z" fill="#12518f"/><path d="M11 10q3-1 4 1-1 2-2 2.500 4 1.500 8-.5 0-1 .5-2l-3 2.500q-3 0-4-1 2-3-1-4z" fill="#e3f4ff"/></svg></button>
    <button class="app" aria-label="QGIS"><svg><use href="#i-q"/></svg></button>
    <button class="app active" aria-label="Notepad"><svg viewBox="0 0 22 22"><path d="M7 2h13l-3 17H1z" fill="#a9dbe3"/><path d="M7 2h9l-7 13H2z" fill="#6fa9b5"/><path d="M17 2h3l-3 17h-5z" fill="#e3f3f5"/></svg></button>
    <button class="app" aria-label="Paint 3D"><svg viewBox="0 0 22 22"><path d="M11 0q8 9 8 14a8 8 0 0 1-16 0q0-5 8-14z" fill="#3ba4e8"/><path d="M11 0q6 6 7.500 11L4 15q-3-5 7-15z" fill="#e64aa0"/><path d="M11 0q4 4 5 7l-10 1q2-4 5-8z" fill="#f9c23c"/></svg></button>
    <div class="tray">
      <button class="news"><svg viewBox="0 0 20 20"><path d="M5 3q-8 7 0 15-1-8 0-15zM10 0q-8 9-2 20Q7 9 10 0zM15 0q-7 9-2 20-1-11 2-20zM19 3q-5 7-3 14 4-6 3-14z" fill="#36b6d4" stroke="#36b6d4"/></svg>Result</button>
      <button aria-label="Hidden icons"><svg viewBox="0 0 14 14"><path d="M2 9l5-5 5 5"/></svg></button>
      <button aria-label="Meet"><svg viewBox="0 0 14 14"><path d="M3 1q4-1 8 0M3 13q4 1 8 0M2.500 3.500h7v7h-7zM10 6l2.500-1.500v5L10 8"/></svg></button>
      <button aria-label="Network"><svg viewBox="0 0 14 14"><path d="M1 1h3v3H1zM2.500 4v8M5 3h8v7H5zM7 12.500h5M9 10v2"/></svg></button>
      <button aria-label="Volume"><svg viewBox="0 0 14 14"><path d="M1 5h2l3-3v10L3 9H1zM9 5l4 4M13 5L9 9"/></svg></button>
      <time>4:02 PM<br>8/28/2024</time>
      <button class="note" aria-label="Notifications"><svg viewBox="0 0 22 22"><path d="M1 1h16v12H9l-4 4v-4H1z" fill="#fff" stroke="none"/><path d="M4 5h10M4 8h10" stroke="#222"/><circle cx="15" cy="15" r="6.500" fill="#3b3b3b" stroke="#aaa"/><text x="15" y="19">3</text></svg></button>
    </div>
  </footer>
</main>
</body>
</html>
```
FILE: styles.css
```css
* { box-sizing: border-box; }
body { margin: 0; background: #fff; color: #111; font: 11px/16px Roboto, "Open Sans", sans-serif; }
h1, h2, p, ul { margin: 0; padding: 0; font-size: inherit; font-weight: 400; }
button, input, select { font: inherit; color: inherit; margin: 0; padding: 0; border: 0; background: none; }
.sprite { position: absolute; width: 0; height: 0; }
.desktop { position: relative; margin: 530px 0; }

/* main window */
.qgis { background: #efefef; }
.titlebar { display: flex; align-items: center; height: 20px; background: #fff; padding-left: 2px; color: #888; }
.logo { width: 15px; height: 15px; margin-right: 4px; }
.winbtns { margin-left: auto; display: flex; }
.winbtns button { width: 41px; height: 18px; }
.winbtns svg { width: 12px; height: 12px; fill: none; stroke: #777; }
.menubar { display: flex; gap: 13px; height: 18px; padding-left: 9px; color: #8c8c8c; }
.toolbar { display: flex; align-items: center; height: 35px; background: linear-gradient(#fafafa, #ededed); border-bottom: 1px solid #b0b0b0; border-top: 1px solid #fff; overflow: hidden; }
.toolbar button { flex: none; display: flex; align-items: center; justify-content: center; width: 30px; height: 28px; }
.toolbar button svg { width: 20px; height: 20px; }
.toolbar button.drop, .docktools button.drop { width: 11px; flex: none; }
.drop::after { content: ""; border: 3px solid transparent; border-top: 4px solid #555; border-bottom: 0; }
.drop.dim::after { border-top-color: #aaa; }
.toolbar .on { background: #dadada; border: 1px solid #999; border-radius: 2px; }
.grip { flex: none; width: 14px; height: 16px; background: radial-gradient(circle, #d4d4d4 1px, transparent 1px) 3px 0 / 4px 4px; background-clip: content-box; padding: 0 3px; }
.sep { flex: none; width: 6px; height: 28px; border-left: 1px solid #c8c8c8; }

.work { display: flex; min-height: 526px; border-bottom: 1px solid #bbb; }
.side { flex: none; width: 274px; display: flex; flex-direction: column; border-right: 1px solid #bbb; }
.dock header { display: flex; align-items: center; height: 18px; padding: 0 7px 0 4px; }
.dockbtns { margin-left: auto; display: flex; gap: 2px; }
.dockbtns button { width: 11px; height: 11px; border: 1px solid #555; border-radius: 2px; font-size: 8px; line-height: 8px; }
.docktools { display: flex; align-items: center; height: 28px; padding-left: 4px; }
.docktools button { width: 22px; height: 20px; display: flex; align-items: center; justify-content: center; }
.docktools svg { width: 14px; height: 14px; }
.docktools.roomy { height: 35px; padding-left: 3px; }
.docktools.roomy button { width: 28px; }
.docktools.roomy button.near { width: 24px; }
.docktools.roomy button.drop { width: 11px; }
.treebox { display: flex; height: 206px; margin-right: 6px; background: #fff; border: 1px solid #aaa; }
.tree { flex: 1; list-style: none; display: flex; flex-direction: column; justify-content: space-between; padding-bottom: 7px; overflow: hidden; }
.tree li { display: flex; align-items: center; height: 16px; padding-left: 18px; gap: 7px; white-space: nowrap; }
.tree svg { width: 13px; height: 13px; flex: none; }
.tree .child { padding-left: 33px; }
.tree .hot { background: #eee; }
.tree .open { padding-left: 4px; }
.open::before, .arrow { content: ""; border: 3px solid transparent; border-top: 4px solid #555; border-bottom: 0; margin-right: 1px; }
.track { width: 13px; border-left: 1px solid #aaa; background: #f2f2f2; }
.layers { flex: 1; display: flex; flex-direction: column; padding-top: 5px; }
.layerbox { flex: 1; margin-right: 7px; background: #fff; border: 1px solid #aaa; border-bottom: 0; }
.layer { display: flex; align-items: center; height: 17px; padding-left: 6px; gap: 7px; background: #eee; }
.layer svg { width: 12px; height: 12px; margin-left: 1px; }
.layer b { font: 600 11px/16px "Open Sans", sans-serif; text-decoration: underline; margin-left: -1px; }
.check { appearance: none; width: 11px; height: 11px; background: #fff; border: 1px solid #999; border-radius: 1px; display: grid; place-items: center; }
.check:checked::after { content: ""; width: 3px; height: 7px; border: solid #111; border-width: 0 2px 2px 0; transform: rotate(40deg); }

/* map canvas */
.map { flex: 1; min-width: 0; height: 525px; display: block; }
.map path { stroke-linejoin: round; stroke-linecap: round; }
.water { fill: #aad3df; }
.lanecase, .laneface { fill: none; stroke: #d0cdc9; stroke-width: 9; }
.laneface { stroke: #fbfaf8; stroke-width: 5; }
.lane path { fill: none; stroke: #dad7d3; stroke-width: 5; }
.roadcase, .road { fill: none; stroke: #b5b0a8; stroke-width: 16; }
.road { stroke: #fff; stroke-width: 11; }
.creek { fill: none; stroke: #a3d0db; stroke-width: 12; }
.trunkcase, .trunk { fill: none; stroke: #d9a25c; stroke-width: 16; }
.trunk { stroke: #fbcf96; stroke-width: 10; }
.mdrcase, .mdr { fill: none; stroke: #c5c28a; stroke-width: 16; }
.mdr { stroke: #f5f8a8; stroke-width: 11; }
.bank, .stream { fill: none; stroke: #f2f5f5; stroke-width: 22; }
.stream { stroke: #9fcde4; stroke-width: 13; }
.coast { fill: none; stroke: #a084a4; stroke-width: 8; }
.area { fill: #bfbb76; stroke: #dd9a4a; stroke-width: 4; marker: url(#node); }
.shield rect { fill: #f3f3c4; stroke: #c5c58a; stroke-width: 2; }
.map text { font-family: "Noto Sans", sans-serif; text-anchor: middle; paint-order: stroke; stroke: #fff; stroke-opacity: .6; stroke-width: 5px; }
.map .village { font-size: 29px; fill: #333; }
.map .town { font-size: 36px; fill: #777; }
.map .ref { font-size: 28px; fill: #444; stroke: none; }
.map .wood text { font-size: 27px; font-style: italic; fill: #2b62c4; }
.map .wood.big text { font-size: 32px; }
.map .bound { font-size: 28px; fill: #8a6a98; text-anchor: start; }
.map .res { font-size: 27px; font-style: italic; fill: #5a92b4; text-anchor: start; stroke: none; }

/* status bar */
.status { display: flex; align-items: center; height: 25px; padding: 0 6px 0 4px; font-size: 10px; }
.status input { min-width: 0; }
.status svg { width: 13px; height: 13px; display: block; }
.locate { display: flex; align-items: center; gap: 6px; width: 182px; height: 20px; padding-left: 7px; margin-right: auto; background: #fff; border: 1px solid #aaa; border-radius: 2px; color: #777; font-size: 11px; }
.locate input { flex: 1; }
.locate input::placeholder { color: #777; }
.field, .combo, .spin { display: flex; height: 19px; margin-left: 3px; background: #fff; border: 1px solid #aaa; border-radius: 2px; }
.coord { width: 97px; padding-left: 5px; margin-right: 4px; }
.status > button { margin-right: 11px; }
.combo { width: 75px; padding-left: 3px; margin-right: 9px; }
.combo input, .spin input { flex: 1; }
.combo i { width: 14px; border-left: 1px solid #ccc; display: grid; place-items: center; }
.combo i::after { content: ""; border: 3px solid transparent; border-top-color: #555; border-bottom: 0; }
.status > button[aria-label="Lock scale"] { margin-right: 6px; }
.spin { width: 76px; padding-left: 4px; margin-right: 8px; }
.spin i { width: 12px; border-left: 1px solid #ccc; display: flex; flex-direction: column; align-items: center; justify-content: center; gap: 3px; }
.spin i::before { content: ""; border: 3px solid transparent; border-bottom: 4px solid #555; border-top: 0; }
.spin i::after { content: ""; border: 3px solid transparent; border-top: 4px solid #555; border-bottom: 0; }
.render { display: flex; align-items: center; gap: 5px; margin-right: 14px; }
.status .epsg { display: flex; align-items: center; gap: 2px; margin-right: 22px; }
.status > .msg { margin: 0; }

/* measure dialog */
.measure { position: absolute; left: 141px; top: 119px; width: 391px; background: #f0f0f0; box-shadow: 0 2px 7px rgba(0, 0, 0, .4); }
.measure header { display: flex; align-items: center; justify-content: space-between; height: 28px; padding-left: 8px; background: #fff; color: #999; }
.measure header button { width: 18px; height: 18px; background: #dcdcdc; }
.measure form { display: flex; flex-direction: column; height: 167px; padding: 9px 9px 8px 8px; }
.row { display: flex; align-items: center; height: 20px; }
.row > label[for] { width: 113px; }
.row #total { width: 139px; height: 20px; padding-right: 4px; margin-right: 6px; background: #fff; border: 1px solid #aaa; border-radius: 2px; text-align: right; font: 700 11px "Open Sans", sans-serif; }
.row select { flex: 1; height: 20px; appearance: none; padding-left: 4px; border: 1px solid #aaa; border-radius: 2px; background: linear-gradient(#fdfdfd, #ececec); }
.row:first-child { position: relative; }
.row:first-child::after { content: ""; position: absolute; right: 7px; top: 8px; border: 3px solid transparent; border-top: 4px solid #555; border-bottom: 0; }
.radios { margin-top: 6px; }
.radios label { display: flex; align-items: center; gap: 5px; width: 113px; }
.radios input { appearance: none; width: 13px; height: 13px; border: 1px solid #999; border-radius: 50%; background: #fff; }
.radios input:checked { background: radial-gradient(circle, #111 3px, #fff 4px); }
details { margin-top: 4px; font: 700 11px/16px "Open Sans", sans-serif; }
summary { list-style: none; display: flex; align-items: center; gap: 8px; padding-left: 5px; }
summary::before { content: ""; border: 5px solid transparent; border-left: 6px solid #333; border-right: 0; }
.actions { display: flex; gap: 6px; margin-top: auto; padding-left: 67px; }
.actions button { flex: 1 1 0; height: 19px; border: 1px solid #aaa; border-radius: 2px; background: linear-gradient(#fff, #ebebeb); }

/* notepad */
.notepad { position: absolute; left: 177px; top: 349px; width: 302px; background: #fff; border: 1px solid #666; box-shadow: 0 3px 9px rgba(0, 0, 0, .4); }
.notepad header { display: flex; align-items: center; height: 27px; padding-left: 7px; font-size: 11px; }
.notepad h2 { flex: 1; }
.notepad header button { width: 41px; height: 26px; }
.notepad header svg { width: 12px; height: 12px; fill: none; stroke: #111; }
.notepad header .logo { width: 14px; height: 15px; margin-right: 6px; stroke: none; }
.notepad nav { display: flex; gap: 14px; height: 17px; padding-left: 6px; }
.pane { display: grid; grid-template: 101px 14px / 1fr 14px; border-top: 1px solid #eee; }
.editor { padding: 1px 5px; outline: 0; font: 21px/22px "Liberation Serif", serif; color: #111; }
.editor .mono { font: 18px/21px "DejaVu Sans Mono", monospace; }
.caret { border-left: 1px solid #000; margin-left: -1px; }
.vbar, .hbar { display: flex; align-items: center; background: #f2f2f2; }
.vbar { flex-direction: column; }
.vbar svg, .hbar svg { flex: none; width: 14px; height: 14px; fill: none; stroke: #444; stroke-width: 1.500; }
.vbar span { width: 13px; height: 56px; background: #cdcdcd; margin-bottom: auto; }
.hbar span { height: 13px; width: 206px; background: #cdcdcd; margin-right: auto; }
.corner { background: radial-gradient(circle, #ccc 1px, transparent 1px) 0 0 / 4px 4px #f2f2f2; }

/* task bar */
.taskbar { display: flex; align-items: stretch; height: 36px; background: linear-gradient(90deg, #332d30, #1e1e1e 36%, #1e1e1e 55%, #302b2b 66%, #2a2a22 80%, #262620); color: #eee; }
.taskbar button { display: flex; align-items: center; justify-content: center; width: 44px; }
.start svg { width: 15px; height: 15px; }
.search { display: flex; align-items: center; width: 261px; padding: 0 10px 0 10px; background: #f1f1f1; border-top: 1px solid #ccc; color: #222; font: 13px "Open Sans", sans-serif; }
.search svg { flex: none; width: 15px; height: 15px; }
.search input { flex: 1; min-width: 0; margin-left: 11px; }
.search input::placeholder { color: #333; }
.search .city { width: 46px; height: 36px; }
.taskbar > button > svg { width: 16px; height: 16px; }
.taskbar .app { border-bottom: 2px solid #76b9ed; width: 39px; margin: 0 3px; padding-top: 2px; }
.taskbar .app svg { width: 22px; height: 22px; }
.taskbar .active { background: #4b4b4b; }
.tray { margin-left: auto; display: flex; padding-right: 8px; }
.tray button { width: 22px; }
.tray svg { width: 14px; height: 14px; fill: none; stroke: #eee; }
.tray .news { width: 80px; gap: 9px; justify-content: flex-start; font: 12px "Open Sans", sans-serif; }
.tray .news svg { width: 19px; height: 19px; stroke: none; }
time { width: 60px; text-align: center; font: 10px/16px "Open Sans", sans-serif; padding-top: 2px; }
.tray .note { width: 38px; }
.note svg { width: 22px; height: 22px; }
.note text { font: 700 9px "Noto Sans", sans-serif; fill: #fff; stroke: none; text-anchor: middle; }
```
